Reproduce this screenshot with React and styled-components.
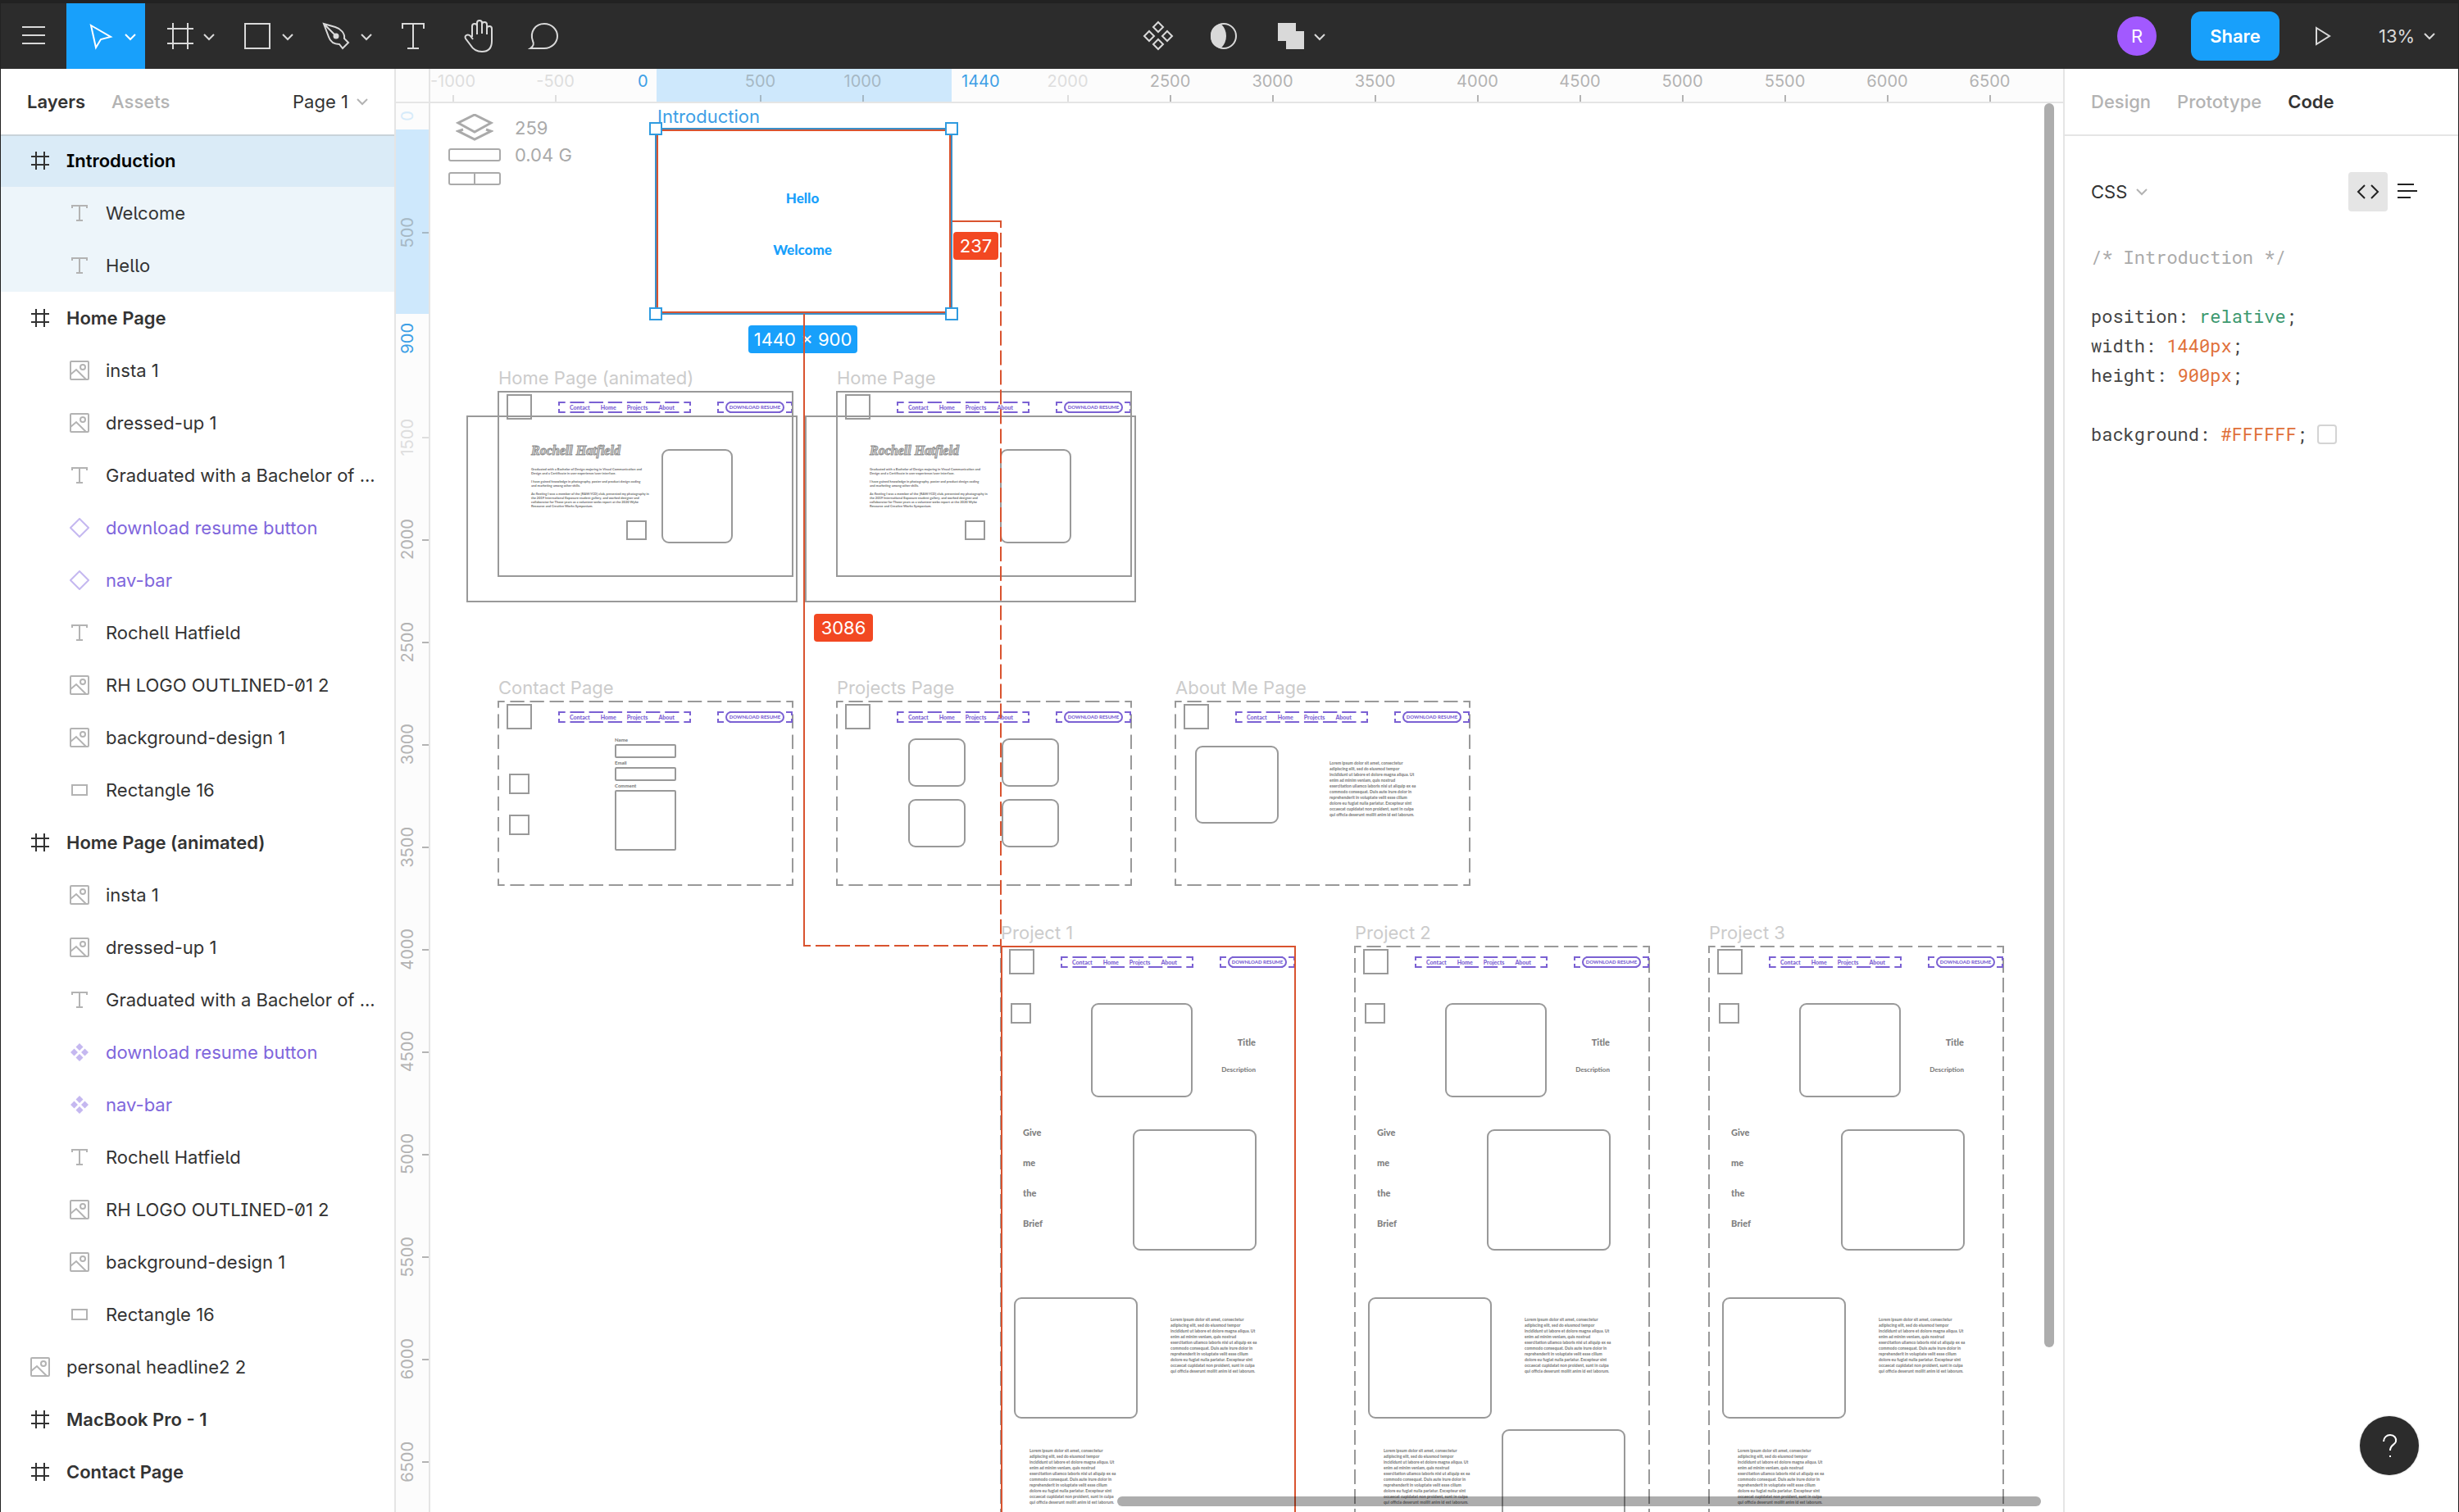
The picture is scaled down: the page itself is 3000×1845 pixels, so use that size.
import React from "react";
import styled, { createGlobalStyle, css } from "styled-components";

const GlobalStyle = createGlobalStyle`
  * { box-sizing: border-box; }
  body { margin: 0; background: #fff; }
  button, select { font: inherit; color: inherit; background: none; border: 0; padding: 0; margin: 0; cursor: pointer; }
  ul { list-style: none; margin: 0; padding: 0; }
  svg { display: block; flex: none; }
`;

const color = {
  bar: "#2c2c2c",
  accent: "#18a0fb",
  red: "#d9532f",
  label: "#f24822",
  wire: "#999",
  purple: "#7b61d3",
  line: "#e5e5e5",
  muted: "#b3b3b3",
};

/* ---------- shell ---------- */

const Shell = styled.div`
  display: grid;
  grid-template-columns: 480px minmax(0, 1fr) 482px;
  grid-template-rows: 84px minmax(0, 1fr);
  height: 100vh;
  border-left: 1px solid #222;
  border-right: 1px solid #222;
  font-family: Inter, "Liberation Sans", sans-serif;
  font-size: 22px;
  line-height: 32px;
  color: #333;
  overflow: hidden;
`;

const Toolbar = styled.header`
  grid-column: 1 / -1;
  display: grid;
  grid-template-columns: 1fr auto 1fr;
  background: ${color.bar};
  border-top: 4px solid #222;
  color: #d9d9d9;
`;

const ToolGroup = styled.div`
  display: flex;
  align-items: center;
  justify-content: ${(p) => p.$align || "flex-start"};
  padding-right: ${(p) => (p.$align === "flex-end" ? 28 : 0)}px;
`;

const Tool = styled.button`
  width: ${(p) => p.$w || 80}px;
  height: 80px;
  color: ${(p) => (p.$active ? "#fff" : "inherit")};
  background: ${(p) => (p.$active ? color.accent : "transparent")};
`;

const Glyph = styled.svg`
  fill: none;
  stroke: currentColor;
  stroke-width: 2;
`;

const Avatar = styled.button`
  width: 48px;
  height: 48px;
  border-radius: 50%;
  background: #a259ff;
  color: #fff;
  margin-right: 42px;
`;

const Share = styled.button`
  width: 108px;
  height: 60px;
  border-radius: 12px;
  background: ${color.accent};
  color: #fff;
  font-weight: 600;
`;

const Play = styled.button`
  width: 106px;
  height: 80px;
  display: grid;
  place-items: center;
`;

const SelectWrap = styled.label`
  display: flex;
  align-items: center;
  gap: 10px;
  padding-left: ${(p) => p.$pad || 0}px;
  svg { color: ${(p) => p.$tick || "inherit"}; }
`;

const Select = styled.select`
  appearance: none;
  outline: none;
`;

/* ---------- side panels ---------- */

const Panel = styled.aside`
  display: flex;
  flex-direction: column;
  min-height: 0;
  overflow: hidden;
  background: #fff;
  border-left: ${(p) => (p.$right ? `2px solid ${color.line}` : "0")};
`;

const PanelHead = styled.div`
  position: relative;
  display: flex;
  align-items: center;
  flex: none;
  height: 80px;
  gap: ${(p) => p.$gap}px;
  padding: 0 32px;
  box-shadow: 0 2px 0 ${(p) => p.$border || color.line};
  > :nth-child(3) { margin-left: ${(p) => (p.$push ? "auto" : 0)}; }
`;

const Tab = styled.button`
  font-weight: ${(p) => (p.$active ? 600 : 500)};
  color: ${(p) => (p.$active ? "#333" : color.muted)};
`;

const LayerRow = styled.button`
  display: flex;
  align-items: center;
  width: 100%;
  height: 64px;
  gap: 20px;
  padding-left: ${(p) => (p.$depth ? 84 : 36)}px;
  text-align: left;
  white-space: nowrap;
  font-weight: ${(p) => (p.$bold ? 600 : 400)};
  font-feature-settings: "ss02";
  background: ${(p) => p.$bg || "transparent"};
  color: ${(p) => (p.$component ? "#7f66dc" : p.$dark ? "#000" : "#333")};
  svg { color: ${(p) => (p.$component ? "#c5b8f0" : p.$bold ? "#333" : "#b3b3b3")}; }
`;

const CodeHead = styled.div`
  display: flex;
  align-items: center;
  justify-content: space-between;
  padding: 46px 38px 0 32px;
`;

const ModeButtons = styled.div`
  display: flex;
`;

const Mode = styled.button`
  width: 48px;
  height: 48px;
  border-radius: 4px;
  color: #222;
  background: ${(p) => (p.$active ? "#e5e5e5" : "transparent")};
`;

const Code = styled.pre`
  display: flex;
  flex-direction: column;
  margin: 38px 0 0;
  padding: 0 32px;
  font-family: "Roboto Mono", "DejaVu Sans Mono", "Liberation Mono", monospace;
  font-size: 22px;
  line-height: 36px;
  color: #444;
`;

const CodeLine = styled.code`
  display: flex;
  align-items: center;
  height: 36px;
  font: inherit;
`;

const Tok = styled.span`
  color: ${(p) => p.$c};
`;

const Swatch = styled.span`
  width: 24px;
  height: 24px;
  margin-left: 12px;
  border: 2px solid #d4d4d4;
  border-radius: 4px;
`;

/* ---------- rulers ---------- */

const Stage = styled.main`
  display: grid;
  grid-template-columns: 42px minmax(0, 1fr);
  grid-template-rows: 42px minmax(0, 1fr);
  min-height: 0;
  border-left: 2px solid ${color.line};
  overflow: hidden;
`;

const Corner = styled.div`
  background: #fcfcfc;
  border-right: 2px solid ${color.line};
  border-bottom: 2px solid ${color.line};
`;

const Ruler = styled.div`
  position: relative;
  display: flex;
  flex-direction: ${(p) => (p.$vertical ? "column" : "row")};
  overflow: hidden;
  background: #fcfcfc;
  border: 0 solid ${color.line};
  font-size: 20px;
  line-height: 24px;
  ${(p) =>
    p.$vertical
      ? css`border-right-width: 2px; padding-top: 95px;`
      : css`border-bottom-width: 2px;`}
`;

const RulerRun = styled.div`
  display: flex;
  flex-direction: ${(p) => (p.$vertical ? "column" : "row")};
  margin-left: ${(p) => (p.$vertical ? 0 : -35)}px;
  z-index: 1;
`;

const Mark = styled.span`
  flex: none;
  display: flex;
  align-items: center;
  justify-content: space-between;
  color: ${(p) => (p.$faint ? "#dedede" : p.$sel ? "#a6b8c4" : color.muted)};
  ${(p) =>
    p.$vertical
      ? css`height: 125px; width: 40px; padding-left: 2px;`
      : css`width: 125px; height: 40px; padding-top: 3px; flex-direction: column;`}
  > span { ${(p) => p.$vertical && css`writing-mode: vertical-rl; transform: rotate(180deg);`} }
  &::after {
    content: "";
    display: ${(p) => (p.$blank ? "none" : "block")};
    background: currentColor;
    ${(p) => (p.$vertical ? css`width: 8px; height: 2px;` : css`width: 2px; height: 8px;`)}
  }
`;

const RulerRange = styled.div`
  position: absolute;
  background: #cee8fc;
  ${(p) => (p.$vertical ? css`left: 0; right: 0; top: 32px; height: 225px;` : css`top: 0; bottom: 0; left: 276px; width: 360px;`)}
`;

const RulerEdge = styled.span`
  position: absolute;
  z-index: 1;
  color: ${(p) => (p.$faint ? "#d6ebfa" : "#3d9fe6")};
  ${(p) =>
    p.$vertical
      ? css`left: 2px; top: ${p.$at}px; writing-mode: vertical-rl; transform: rotate(180deg);`
      : css`top: 3px; left: ${p.$at}px;`}
`;

/* ---------- canvas ---------- */

const Canvas = styled.section`
  position: relative;
  overflow: hidden;
  background: #fff;
`;

/* Nodes given an x/y sit freely on the canvas; the others flow in their parent. */
const place = css`
  ${(p) =>
    p.$x !== undefined &&
    css`
      position: absolute;
      left: ${p.$x}px;
      top: ${p.$y}px;
    `}
  flex: none;
  width: ${(p) => (p.$w ? `${p.$w}px` : "auto")};
  height: ${(p) => (p.$h ? `${p.$h}px` : "auto")};
`;

const dash = (dir, c) =>
  `linear-gradient(${dir}, ${c} 0 36%, transparent 36% 64%, ${c} 64% 100%)`;

const dashedEdges = css`
  background-image: ${(p) => {
    const c = p.$c || color.wire;
    return [dash("90deg", c), dash("90deg", c), dash("180deg", c), dash("180deg", c)].join(",");
  }};
  background-size: 24px 2px, 24px 2px, 2px ${(p) => p.$tile || 24}px, 2px ${(p) => p.$tile || 24}px;
  background-position: left top, left bottom, left top, right top;
  background-repeat: round no-repeat, round no-repeat, no-repeat round, no-repeat round;
`;

const Artboard = styled.div`
  ${place}
  ${dashedEdges}
`;

const ArtTitle = styled.span`
  position: absolute;
  left: 1px;
  bottom: 100%;
  line-height: 32px;
  white-space: nowrap;
  color: ${(p) => p.$c || "#ccc"};
`;

const Wire = styled.div`
  ${place}
  border: 2px solid ${(p) => p.$c || color.wire};
  border-radius: ${(p) => p.$r || 0}px;
`;

const Note = styled.div`
  ${place}
  font-family: Lato, "Open Sans", sans-serif;
  font-size: ${(p) => p.$size}px;
  line-height: ${(p) => p.$lh}px;
  font-weight: ${(p) => p.$weight || 900};
  color: ${(p) => p.$c || "#808080"};
  text-align: ${(p) => p.$align || "left"};
  white-space: pre;
`;

const WireHeader = styled.div`
  display: flex;
  gap: 32px;
  padding: 4px 1px 0 11px;
`;

const WireNav = styled.div`
  ${dashedEdges}
  display: flex;
  align-items: center;
  justify-content: ${(p) => (p.$center ? "center" : "space-between")};
  flex: none;
  width: ${(p) => (p.$center ? 92 : 162)}px;
  height: 14px;
  margin-top: 9px;
  padding: ${(p) => (p.$center ? 0 : "0 20px 0 14px")};
  font-family: Lato, sans-serif;
  font-size: 7px;
  line-height: 12px;
  font-weight: 900;
  color: ${color.purple};
`;

const Pill = styled.div`
  width: 72px;
  height: 14px;
  border: 2px solid ${color.purple};
  border-radius: 8px;
  font-size: 6px;
  line-height: 10px;
  text-align: center;
  white-space: nowrap;
`;

const WireForm = styled.div`
  display: flex;
  flex-direction: column;
  width: 75px;
  margin: 7px 0 0 143px;
`;

const WireGrid = styled.div`
  display: grid;
  grid-template-columns: 70px 70px;
  grid-auto-rows: 59px;
  gap: 15px 44px;
  margin: 11px 0 0 88px;
`;

const Signature = styled.div`
  ${place}
  font: italic bold 16px/20px "Liberation Serif", serif;
  color: #ddd;
  -webkit-text-stroke: 1px #8f8f8f;
  white-space: nowrap;
`;

const Copy = styled.div`
  ${place}
  display: flex;
  flex-direction: column;
  gap: 5px;
  font-family: Lato, sans-serif;
  font-size: 4px;
  line-height: 5px;
  font-weight: 900;
  color: #777;
  white-space: pre;
`;

const SelectionBox = styled.div`
  ${place}
  border: 2px solid #3b8fc8;
  box-shadow: inset 0 0 0 2px ${color.red};
`;

const Handle = styled.span`
  ${place}
  border: 2px solid #2f9be0;
  background: #fff;
`;

const Guide = styled.div`
  ${place}
  ${(p) =>
    p.$dashed
      ? p.$w > p.$h
        ? css`background: ${dash("90deg", color.red)} left top / 24px 2px round no-repeat;`
        : css`background: ${dash("180deg", color.red)} left top / 2px 24px no-repeat round;`
      : css`background: ${color.red};`}
`;

const Outline = styled.div`
  ${place}
  border: 2px solid ${color.red};
  border-bottom: 0;
`;

const Measure = styled.span`
  ${place}
  border-radius: 4px;
  background: ${(p) => p.$c};
  color: #fff;
  line-height: 34px;
  text-align: center;
  white-space: nowrap;
`;

const Stats = styled.div`
  ${place}
  display: grid;
  grid-template-columns: 64px auto;
  grid-template-rows: 44px 22px 36px;
  column-gap: 17px;
  justify-items: center;
  align-items: center;
  line-height: 30px;
  color: #aaa;
  span { justify-self: start; white-space: nowrap; }
`;

const Meter = styled.i`
  width: 64px;
  height: 16px;
  border: 2px solid #aaa;
  border-radius: 3px;
  ${(p) => p.$split && css`background: linear-gradient(#aaa, #aaa) center / 2px 100% no-repeat;`}
`;

const Scrollbar = styled.div`
  position: absolute;
  border-radius: 6px;
  background: rgba(0, 0, 0, 0.32);
  ${(p) =>
    p.$vertical
      ? css`top: 0; right: 11px; width: 12px; height: 1518px;`
      : css`bottom: 7px; left: 838px; right: 27px; height: 12px;`}
`;

const Help = styled.button`
  position: fixed;
  right: 49px;
  bottom: 45px;
  width: 72px;
  height: 72px;
  border-radius: 50%;
  background: ${color.bar};
  color: #fff;
  box-shadow: 0 0 2px rgba(0, 0, 0, 0.3);
`;

/* ---------- icons ---------- */

const Chevron = () => (
  <Glyph width="14" height="10" viewBox="0 0 14 10" aria-hidden="true">
    <path d="M1 2l6 6 6-6" />
  </Glyph>
);

const layerIcons = {
  frame: <path d="M7 1v22M17 1v22M1 7h22M1 17h22" />,
  text: <path d="M3 6V3h18v3M12 3v18M8 21h8" />,
  image: (
    <>
      <rect x="1" y="1" width="22" height="22" rx="1" />
      <circle cx="16" cy="8" r="3" />
      <path d="M1 17l7-6 12 12" />
    </>
  ),
  instance: <path d="M12 1l11 11-11 11L1 12z" />,
  component: (
    <path
      fill="currentColor"
      stroke="none"
      d="M12 1l4.500 4.500L12 10 7.500 5.500zM12 14l4.500 4.500L12 23l-4.500-4.500zM5.500 7.500L10 12l-4.500 4.500L1 12zM18.500 7.500L23 12l-4.500 4.500L14 12z"
    />
  ),
  rect: <rect x="3" y="6" width="18" height="12" />,
};

const LayerIcon = ({ kind }) => (
  <Glyph width="24" height="24" viewBox="0 0 24 24" aria-hidden="true">
    {layerIcons[kind]}
  </Glyph>
);

const ToolIcon = ({ w = 80, children }) => (
  <Glyph width={w} height="80" viewBox={`0 0 ${w} 80`} aria-hidden="true">
    {children}
    {w === 96 && <path d="M72 38l6 6 6-6" />}
  </Glyph>
);

/* ---------- data ---------- */

const pageLayers = (shape) => [
  ["image", "insta 1"],
  ["image", "dressed-up 1"],
  ["text", "Graduated with a Bachelor of ..."],
  [shape, "download resume button"],
  [shape, "nav-bar"],
  ["text", "Rochell Hatfield"],
  ["image", "RH LOGO OUTLINED-01 2"],
  ["image", "background-design 1"],
  ["rect", "Rectangle 16"],
].map(([kind, name]) => ({ kind, name, depth: 1 }));

const layers = [
  { kind: "frame", name: "Introduction", bg: "#daebf7", dark: true },
  { kind: "text", name: "Welcome", depth: 1, bg: "#edf5fa" },
  { kind: "text", name: "Hello", depth: 1, bg: "#edf5fa" },
  { kind: "frame", name: "Home Page" },
  ...pageLayers("instance"),
  { kind: "frame", name: "Home Page (animated)" },
  ...pageLayers("component"),
  { kind: "image", name: "personal headline2 2" },
  { kind: "frame", name: "MacBook Pro - 1" },
  { kind: "frame", name: "Contact Page" },
];

const steps = (from, to) => {
  const out = [];
  for (let v = from; v <= to; v += 500) out.push(v);
  return out;
};

const lorem = [
  "Lorem ipsum dolor sit amet, consectetur",
  "adipiscing elit, sed do eiusmod tempor",
  "incididunt ut labore et dolore magna aliqua. Ut",
  "enim ad minim veniam, quis nostrud",
  "exercitation ullamco laboris nisi ut aliquip ex ea",
  "commodo consequat. Duis aute irure dolor in",
  "reprehenderit in voluptate velit esse cillum",
  "dolore eu fugiat nulla pariatur. Excepteur sint",
  "occaecat cupidatat non proident, sunt in culpa",
  "qui officia deserunt mollit anim id est laborum.",
].join("\n");

const bio = [
  `Graduated with a Bachelor of Design majoring in Visual Communication and
Design and a Certificate in user experience/user interface.`,
  `I have gained knowledge in photography, poster and product design coding
and marketing among other skills.`,
  `As fleeting I was a member of the [RAW:YCD] club, presented my photography in
the 2019 International Exposure student gallery, and worked designer and
collaborator for Those years as a volunteer webs report at the 2020 Wyke
Resource and Creative Works Symposium.`,
];

/* ---------- canvas pieces ---------- */

const PageNav = () => (
  <WireHeader>
    <Wire $w={31} $h={31} />
    <WireNav $c={color.purple} $tile={14}>
      <span>Contact</span>
      <span>Home</span>
      <span>Projects</span>
      <span>About</span>
    </WireNav>
    <WireNav $center $c={color.purple} $tile={14}>
      <Pill>DOWNLOAD RESUME</Pill>
    </WireNav>
  </WireHeader>
);

const HomeBoard = ({ x, title }) => (
  <>
    <Wire $x={x - 38} $y={381} $w={404} $h={228} />
    <Artboard $x={x} $y={351} $w={361} $h={227}>
      <ArtTitle>{title}</ArtTitle>
      <Wire $x={0} $y={0} $w={361} $h={227} />
      <PageNav />
      <Signature $x={41} $y={63}>Rochell Hatfield</Signature>
      <Copy $x={41} $y={93}>
        {bio.map((t) => (
          <span key={t}>{t}</span>
        ))}
      </Copy>
      <Wire $x={157} $y={158} $w={25} $h={24} />
      <Wire $x={200} $y={71} $w={87} $h={115} $r={9} />
    </Artboard>
  </>
);

const ProjectBoard = ({ x, title, extra }) => (
  <Artboard $x={x} $y={1028} $w={361} $h={960}>
    <ArtTitle>{title}</ArtTitle>
    <PageNav />
    <Wire $x={13} $y={70} $w={25} $h={25} />
    <Wire $x={111} $y={70} $w={124} $h={115} $r={9} />
    <Note $x={252} $y={110} $w={60} $size={11} $lh={16} $align="right">Title</Note>
    <Note $x={252} $y={143} $w={60} $size={8} $lh={16} $align="right">Description</Note>
    <Note $x={28} $y={209} $size={11} $lh={37}>{"Give\nme\nthe\nBrief"}</Note>
    <Wire $x={162} $y={224} $w={151} $h={148} $r={9} />
    <Wire $x={17} $y={429} $w={151} $h={148} $r={9} />
    <Note $x={208} $y={453} $size={5} $lh={7}>{lorem}</Note>
    <Note $x={36} $y={613} $size={5} $lh={7}>{lorem}</Note>
    {extra && <Wire $x={180} $y={590} $w={151} $h={148} $r={9} />}
  </Artboard>
);

const Board = () => (
  <Canvas aria-label="Canvas">
    <Stats $x={22} $y={8}>
      <Glyph width="46" height="34" viewBox="0 0 46 34" aria-hidden="true">
        <path d="M23 1l20 10-20 11L3 11zM9 19l-6 2 20 10 20-10-6-2" strokeWidth="3" />
      </Glyph>
      <span>259</span>
      <Meter />
      <span>0.04 G</span>
      <Meter $split />
    </Stats>

    <HomeBoard x={82} title="Home Page (animated)" />
    <HomeBoard x={495} title="Home Page" />

    <Artboard $x={82} $y={729} $w={361} $h={226}>
      <ArtTitle>Contact Page</ArtTitle>
      <PageNav />
      <Wire $x={14} $y={89} $w={25} $h={25} />
      <Wire $x={14} $y={139} $w={25} $h={25} />
      <WireForm>
        <Note $size={6} $lh={11}>Name</Note>
        <Wire $h={17} $r={2} />
        <Note $size={6} $lh={11}>Email</Note>
        <Wire $h={17} $r={2} />
        <Note $size={6} $lh={11}>Comment</Note>
        <Wire $h={74} $r={2} />
      </WireForm>
    </Artboard>

    <Artboard $x={495} $y={729} $w={361} $h={226}>
      <ArtTitle>Projects Page</ArtTitle>
      <PageNav />
      <WireGrid>
        <Wire $r={9} />
        <Wire $r={9} />
        <Wire $r={9} />
        <Wire $r={9} />
      </WireGrid>
    </Artboard>

    <Artboard $x={908} $y={729} $w={361} $h={226}>
      <ArtTitle>About Me Page</ArtTitle>
      <PageNav />
      <Wire $x={25} $y={55} $w={102} $h={95} $r={9} />
      <Note $x={189} $y={73} $size={5} $lh={7}>{lorem}</Note>
    </Artboard>

    <ProjectBoard x={695} title="Project 1" />
    <ProjectBoard x={1127} title="Project 2" extra />
    <ProjectBoard x={1559} title="Project 3" />

    <SelectionBox $x={274} $y={30} $w={363} $h={228}>
      <ArtTitle $c="#3d9fe6">Introduction</ArtTitle>
      <Note $x={140} $y={72} $w={76} $size={17} $lh={24} $c={color.accent} $align="center">Hello</Note>
      <Note $x={130} $y={135} $w={96} $size={17} $lh={24} $c={color.accent} $align="center">Welcome</Note>
      <Handle $x={-9} $y={-9} $w={16} $h={16} />
      <Handle $x={352} $y={-9} $w={16} $h={16} />
      <Handle $x={-9} $y={217} $w={16} $h={16} />
      <Handle $x={352} $y={217} $w={16} $h={16} />
    </SelectionBox>

    <Measure $x={388} $y={271} $w={133} $h={34} $c={color.accent}>1440 × 900</Measure>
    <Guide $x={637} $y={143} $w={59} $h={2} />
    <Guide $x={695} $y={143} $w={2} $h={886} $dashed />
    <Guide $x={455} $y={257} $w={2} $h={772} />
    <Guide $x={455} $y={1027} $w={240} $h={2} $dashed />
    <Outline $x={696} $y={1028} $w={360} $h={960} />
    <Measure $x={638} $y={157} $w={55} $h={34} $c={color.label}>237</Measure>
    <Measure $x={468} $y={623} $w={72} $h={34} $c={color.label}>3086</Measure>

    <Scrollbar $vertical />
    <Scrollbar />
  </Canvas>
);

/* ---------- app ---------- */

export default function App() {
  return (
    <>
      <GlobalStyle />
      <Shell>
        <Toolbar>
          <ToolGroup>
            <Tool aria-label="Menu">
              <ToolIcon><path d="M26 29h28M26 39h28M26 49h28" /></ToolIcon>
            </Tool>
            <Tool $w={96} $active aria-label="Move">
              <ToolIcon w={96}><path d="M30 27l24 14-12 3-6 10z" /></ToolIcon>
            </Tool>
            <Tool $w={96} aria-label="Frame">
              <ToolIcon w={96}><path d="M34 24v32M52 24v32M27 31h32M27 49h32" /></ToolIcon>
            </Tool>
            <Tool $w={96} aria-label="Shape">
              <ToolIcon w={96}><rect x="26" y="25" width="30" height="30" /></ToolIcon>
            </Tool>
            <Tool $w={96} aria-label="Pen">
              <ToolIcon w={96}>
                <path d="M26 25l14 4c7 2 12 8 11 14l5 5-7 7-4-5c-6 0-11-3-13-9zM26 25l14 14" />
                <circle cx="41" cy="40" r="2.500" fill="currentColor" />
              </ToolIcon>
            </Tool>
            <Tool aria-label="Text">
              <ToolIcon><path d="M26 31v-6h26v6M39 25v30M32 55h14" /></ToolIcon>
            </Tool>
            <Tool aria-label="Hand">
              <ToolIcon>
                <path d="M31 41V28a3 3 0 0 1 6 0v10M37 28v-4a3 3 0 0 1 6 0v13M43 26a3 3 0 0 1 6 0v12M49 31a3 3 0 0 1 6 0v15c0 8-4 13-12 13-7 0-11-3-14-8l-6-8c-2-4 3-6 6-3l3 4" />
              </ToolIcon>
            </Tool>
            <Tool aria-label="Comment">
              <ToolIcon><path d="M22 55c3-2 5-5 3-9-4-11 3-21 14-21 9 0 16 7 16 15s-7 15-16 15z" /></ToolIcon>
            </Tool>
          </ToolGroup>
          <ToolGroup>
            <Tool aria-label="Components">
              <ToolIcon>
                <path d="M41 23l6 6-6 6-6-6zM41 44l6 6-6 6-6-6zM30 34l6 6-6 6-6-6zM52 34l6 6-6 6-6-6z" />
              </ToolIcon>
            </Tool>
            <Tool aria-label="Mask">
              <ToolIcon>
                <circle cx="41" cy="40" r="15" />
                <path fill="currentColor" d="M37 26c8 8 8 20 0 28-8-2-11-8-11-14s3-12 11-14z" />
              </ToolIcon>
            </Tool>
            <Tool $w={96} aria-label="Union">
              <ToolIcon w={96}><path fill="currentColor" stroke="none" d="M27 24h22v10h10v22H37V46H27z" /></ToolIcon>
            </Tool>
          </ToolGroup>
          <ToolGroup $align="flex-end">
            <Avatar aria-label="Account">R</Avatar>
            <Share>Share</Share>
            <Play aria-label="Present">
              <Glyph width="20" height="24" viewBox="0 0 20 24" aria-hidden="true"><path d="M2 2l16 10L2 22z" /></Glyph>
            </Play>
            <SelectWrap $pad={15}>
              <Select aria-label="Zoom" defaultValue="13%"><option>13%</option></Select>
              <Chevron />
            </SelectWrap>
          </ToolGroup>
        </Toolbar>

        <Panel aria-label="Layers">
          <PanelHead $gap={32} $push $border="#c9d3da">
            <Tab $active>Layers</Tab>
            <Tab>Assets</Tab>
            <SelectWrap $tick="#b3b3b3">
              <Select aria-label="Page" defaultValue="Page 1"><option>Page 1</option></Select>
              <Chevron />
            </SelectWrap>
          </PanelHead>
          <ul>
            {layers.map((l, i) => (
              <li key={i}>
                <LayerRow
                  $depth={l.depth}
                  $bold={l.kind === "frame"}
                  $dark={l.dark}
                  $bg={l.bg}
                  $component={l.kind === "instance" || l.kind === "component"}
                >
                  <LayerIcon kind={l.kind} />
                  {l.name}
                </LayerRow>
              </li>
            ))}
          </ul>
        </Panel>

        <Stage>
          <Corner />
          <Ruler>
            <RulerRange />
            <RulerRun>
              {steps(-1000, 6500).map((v) => {
                const blank = v === 0 || v === 1500;
                return (
                  <Mark key={v} $blank={blank} $faint={v < 0 || v === 2000} $sel={v > 0 && v < 1440}>
                    <span>{blank ? "" : v}</span>
                  </Mark>
                );
              })}
            </RulerRun>
            <RulerEdge $at={253}>0</RulerEdge>
            <RulerEdge $at={648}>1440</RulerEdge>
          </Ruler>
          <Ruler $vertical>
            <RulerRange $vertical />
            <RulerRun $vertical>
              {steps(500, 6500).map((v) => (
                <Mark key={v} $vertical $blank={v === 1000} $faint={v === 1500} $sel={v === 500}>
                  <span>{v === 1000 ? "" : v}</span>
                </Mark>
              ))}
            </RulerRun>
            <RulerEdge $vertical $at={9} $faint>0</RulerEdge>
            <RulerEdge $vertical $at={268}>900</RulerEdge>
          </Ruler>
          <Board />
        </Stage>

        <Panel $right aria-label="Inspector">
          <PanelHead $gap={32}>
            <Tab>Design</Tab>
            <Tab>Prototype</Tab>
            <Tab $active>Code</Tab>
          </PanelHead>
          <CodeHead>
            <SelectWrap $tick="#b3b3b3">
              <Select aria-label="Language" defaultValue="CSS"><option>CSS</option></Select>
              <Chevron />
            </SelectWrap>
            <ModeButtons>
              <Mode $active aria-label="Code view">
                <Glyph width="48" height="48" viewBox="0 0 48 48"><path d="M20 16l-8 8 8 8M28 16l8 8-8 8" /></Glyph>
              </Mode>
              <Mode aria-label="Table view">
                <Glyph width="48" height="48" viewBox="0 0 48 48"><path d="M12 15h20M12 23h24M12 31h16" /></Glyph>
              </Mode>
            </ModeButtons>
          </CodeHead>
          <Code>
            <CodeLine><Tok $c="#aaa">{"/* Introduction */"}</Tok></CodeLine>
            <CodeLine />
            <CodeLine><span>{"position: "}</span><Tok $c="#3d9970">relative</Tok><span>;</span></CodeLine>
            <CodeLine><span>{"width: "}</span><Tok $c="#e0703a">1440px</Tok><span>;</span></CodeLine>
            <CodeLine><span>{"height: "}</span><Tok $c="#e0703a">900px</Tok><span>;</span></CodeLine>
            <CodeLine />
            <CodeLine>
              <span>{"background: "}</span><Tok $c="#e0703a">#FFFFFF</Tok><span>;</span>
              <Swatch />
            </CodeLine>
          </Code>
        </Panel>
      </Shell>
      <Help aria-label="Help">
        <Glyph width="72" height="72" viewBox="0 0 72 72">
          <path d="M29 31c0-5 4-8 8-8 5 0 8 4 7 8-1 4-7 4-7 11M36 49h2" />
        </Glyph>
      </Help>
    </>
  );
}
